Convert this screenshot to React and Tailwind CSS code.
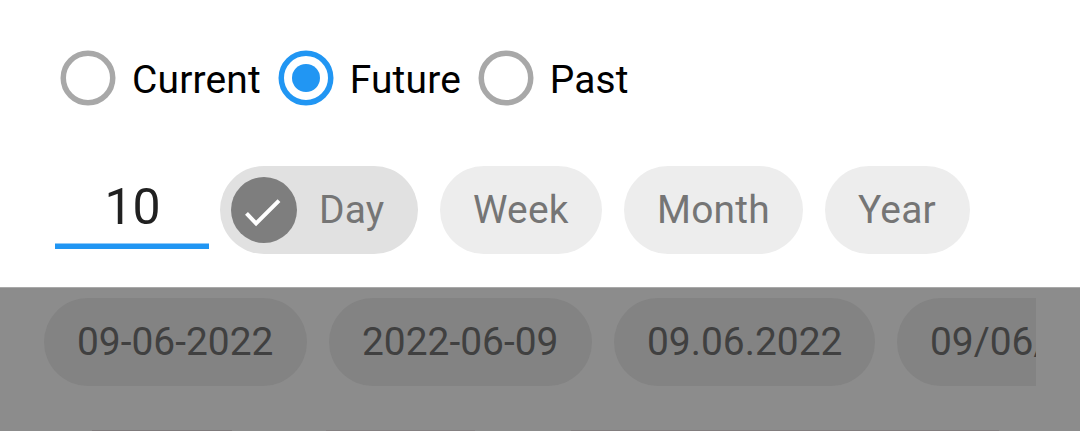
const periods = ["Current", "Future", "Past"];

const units = [
  { name: "Day", width: "w-[198px]" },
  { name: "Week", width: "w-[162px]" },
  { name: "Month", width: "w-[179px]" },
  { name: "Year", width: "w-[145px]" },
];

const formats = [
  { label: "09-06-2022", width: "w-[263px]" },
  { label: "2022-06-09", width: "w-[263px]" },
  { label: "09.06.2022", width: "w-[261px]" },
  { label: "09/06/2022", width: "w-[263px]" },
];

function Radio({ checked }) {
  return (
    <svg viewBox="0 0 56 56" className={`size-14 shrink-0 ${checked ? "text-[#2196f3]" : "text-[#a8a8a8]"}`}>
      <circle cx="28" cy="28" r="24.75" fill="none" stroke="currentColor" strokeWidth="5.5" />
      {checked && <circle cx="28" cy="28" r="14" fill="currentColor" />}
    </svg>
  );
}

function UnitChip({ name, width, selected }) {
  return (
    <button className={`flex h-[88px] shrink-0 items-center rounded-full text-[#757575] ${width} ${selected ? "bg-[#e1e1e1] pl-[11px]" : "bg-[#ededed] pl-[33px]"}`}>
      {selected && (
        <svg viewBox="0 0 66 66" className="mr-[22px] size-[66px] shrink-0">
          <circle cx="33" cy="33" r="33" fill="#7e7e7e" />
          <path d="M15.5 36.3 L25.1 46.5 L48 23.7" fill="none" stroke="#fff" strokeWidth="4" />
        </svg>
      )}
      <span className="pb-0.5 tracking-[0.2px]">{name}</span>
    </button>
  );
}

export default function App() {
  return (
    <div className="flex h-[431px] w-[1080px] flex-col overflow-hidden bg-white font-['Roboto',sans-serif] text-[38.9px] leading-[45px]">
      <div className="h-[287px] shrink-0">
        <div className="flex h-[106px] items-start pt-[50px] pl-[60px] text-black">
          {periods.map((period) => (
            <label key={period} className="mr-[16.7px] flex h-14 items-center gap-4">
              <Radio checked={period === "Future"} />
              <span className="pt-0.5 tracking-[0.2px]">{period}</span>
            </label>
          ))}
        </div>
        <div className="mt-[60px] flex h-[88px] gap-[22px] pl-[55px]">
          <input
            type="text"
            defaultValue="10"
            className="-mr-[11px] h-[83px] w-[154px] border-b-[5px] border-[#2196f3] pt-1 pl-px text-center text-[50px] leading-[60px] text-[#212121] shadow-[inset_0_-1px_0_#90caf9] outline-none"
          />
          {units.map((unit) => (
            <UnitChip key={unit.name} {...unit} selected={unit.name === "Day"} />
          ))}
        </div>
      </div>

      {/* dimmed content behind the sheet */}
      <div className="h-36 shrink-0 border-t border-[#a9a9a9] bg-[#8c8c8c] px-11 pt-2.5">
        <div className="flex h-[88px] gap-[22px] overflow-hidden text-[#404040]">
          {formats.map(({ label, width }) => (
            <div key={label} className={`flex shrink-0 items-center rounded-full bg-[#838383] pb-0.5 pl-[33px] ${width}`}>
              {label}
            </div>
          ))}
        </div>
        {/* top edges of the next row */}
        <div className="mt-11 flex h-px pl-12">
          <div className="w-[140px] bg-[#7f7b7c]" />
          <div className="ml-[94px] w-[149px] bg-[#858182]" />
          <div className="ml-[96px] w-[428px] bg-[#827e7f]" />
        </div>
      </div>
    </div>
  );
}
